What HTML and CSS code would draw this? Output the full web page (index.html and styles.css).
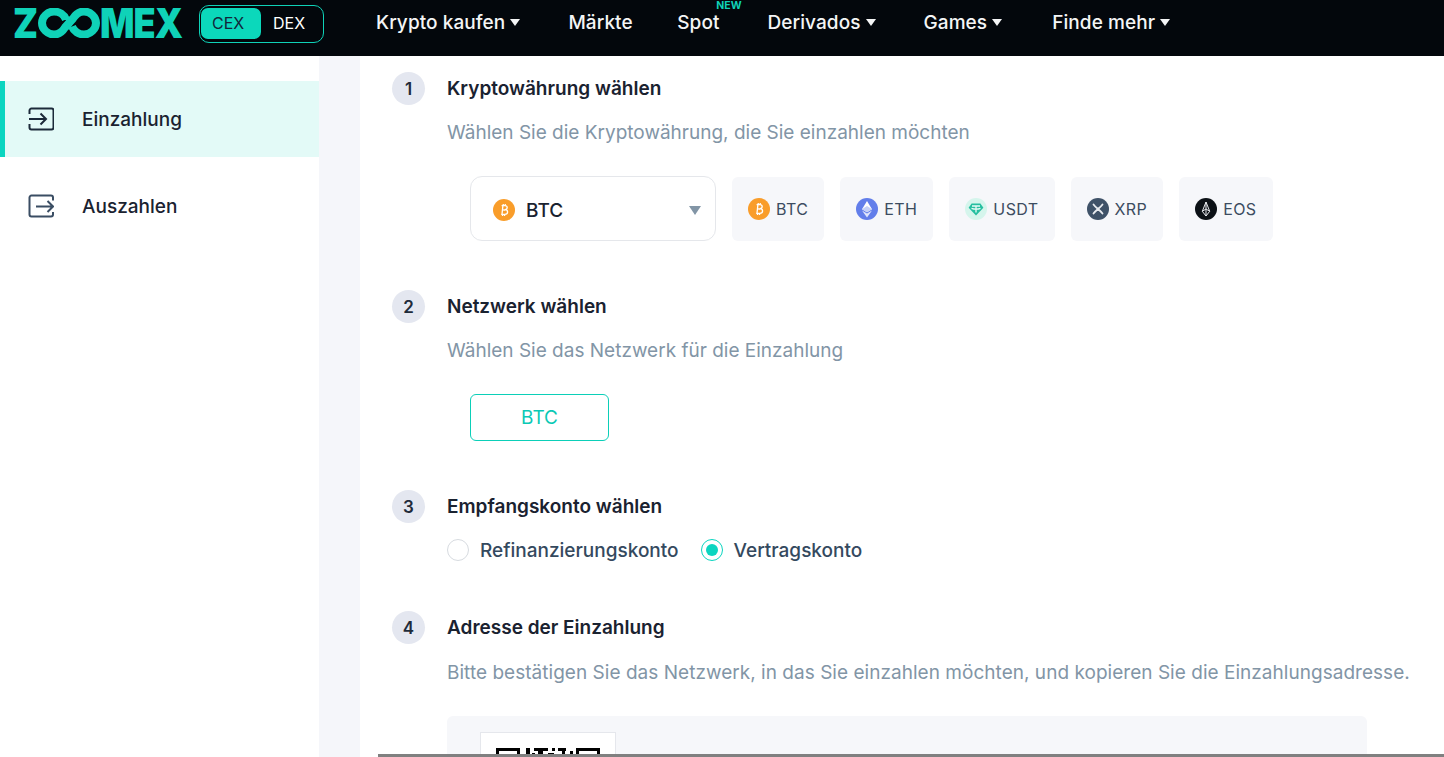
FILE: index.html
```html
<!DOCTYPE html>
<html lang="de">
<head>
  <meta charset="UTF-8" />
  <meta name="viewport" content="width=device-width, initial-scale=1.0"/>
  <title>Zoomex - Einzahlung</title>
  <link rel="stylesheet" href="styles.css">
</head>
<body>
  <svg class="defs" width="0" height="0">
    <symbol id="coin-btc" viewBox="0 0 22 22">
      <circle cx="11" cy="11" r="11" fill="#f99d2a"/>
      <path d="M8.600 6.600h3.200c1.500 0 2.400.8 2.400 2s-.8 1.900-2.200 2c1.600.1 2.600 1 2.600 2.300 0 1.400-1.100 2.400-2.800 2.400H8.200M9.900 6.600l-.9 8.700M10.200 11h1.800M10.300 5l-.2 1.600M12.300 5l-.2 1.600M9.700 15.300l-.2 1.700M11.700 15.300l-.2 1.700" fill="none" stroke="#fff" stroke-width="1.300"/>
    </symbol>
    <symbol id="coin-eth" viewBox="0 0 22 22">
      <circle cx="11" cy="11" r="11" fill="#627eea"/>
      <path d="M11 3l-5 8.200 5 3 5-3z" fill="#fff"/>
      <path d="M11 15.400l-5-3 5 7 5-7z" fill="#fff" opacity=".8"/>
      <path d="M11 8l-5 3.200 5 3 5-3z" fill="#c5d0f7"/>
    </symbol>
    <symbol id="coin-usdt" viewBox="0 0 22 22">
      <circle cx="11" cy="11" r="11" fill="#d5f5ec"/>
      <path d="M6.600 5.500h8.800l3 4.200L11 17.500 3.600 9.700z" fill="#26bfa0"/>
      <path d="M7 8h8M11 8v6.500M6.500 10.300c2.800 1 6.200 1 9 0" fill="none" stroke="#e9fbf6" stroke-width="1.300"/>
    </symbol>
    <symbol id="coin-xrp" viewBox="0 0 22 22">
      <circle cx="11" cy="11" r="11" fill="#3f5268"/>
      <path d="M6.500 6.500c2.500 3.500 6.500 5.500 9 9M15.500 6.500c-2.500 3.500-6.500 5.500-9 9" fill="none" stroke="#e8ebef" stroke-width="1.800" stroke-linecap="round"/>
    </symbol>
    <symbol id="coin-eos" viewBox="0 0 22 22">
      <circle cx="11" cy="11" r="11" fill="#0c1116"/>
      <path d="M11 4L7.300 13.300 11 18l3.700-4.700zM11 4v14M7.300 13.300L11 11l3.700 2.300" fill="none" stroke="#e8ebef" stroke-width="1"/>
    </symbol>
  </svg>

  <header class="topbar">
    <a class="logo" aria-label="Zoomex">
      <span class="logo-z">Z</span>
      <svg class="logo-oo" viewBox="0 0 62 30" width="62" height="30">
        <path d="M28 11.500C26 6.500 21 3.500 16 3.500 9.500 3.500 4 9 4 15S9.500 26.500 16 26.500c5 0 8.500-3 11-7l8-9c2.500-4 6-7 11-7 6.500 0 12 5.500 12 11.500S52.500 26.500 46 26.500c-5 0-10-3-12-8" fill="none" stroke="#0fd2b8" stroke-width="8"/>
      </svg>
      <span class="logo-mex">MEX</span>
    </a>
    <div class="switch">
      <span class="switch-item active">CEX</span>
      <span class="switch-item">DEX</span>
    </div>
    <nav class="nav">
      <a class="nav-item">Krypto kaufen<i class="caret"></i></a>
      <a class="nav-item">Märkte</a>
      <a class="nav-item spot">Spot<span class="new">NEW</span></a>
      <a class="nav-item">Derivados<i class="caret"></i></a>
      <a class="nav-item">Games<i class="caret"></i></a>
      <a class="nav-item more">Finde mehr<i class="caret"></i></a>
    </nav>
  </header>

  <div class="layout">
    <aside class="sidebar">
      <a class="side-item active">
        <svg class="side-icon" viewBox="0 0 26 24" width="26" height="24">
          <path d="M1.500 7V3.500a2 2 0 0 1 2-2h20a2 2 0 0 1 2 2v17a2 2 0 0 1-2 2h-20a2 2 0 0 1-2-2V17" fill="none" stroke="#1c2a3a" stroke-width="2"/>
          <path d="M1 12h16.500M12.500 6.500l5.500 5.500-5.500 5.500" fill="none" stroke="#1c2a3a" stroke-width="2"/>
        </svg>
        Einzahlung
      </a>
      <a class="side-item">
        <svg class="side-icon" viewBox="0 0 26 24" width="26" height="24">
          <path d="M25 6.500V3.500a2 2 0 0 0-2-2H3.500a2 2 0 0 0-2 2v17a2 2 0 0 0 2 2H23a2 2 0 0 0 2-2V18" fill="none" stroke="#3a4d63" stroke-width="2"/>
          <path d="M8 12.500h17M19.500 7l5.500 5.500-5.500 5.500" fill="none" stroke="#3a4d63" stroke-width="2"/>
        </svg>
        Auszahlen
      </a>
    </aside>

    <main class="content">
      <section class="step">
        <div class="step-head"><span class="step-num">1</span><h3>Kryptowährung wählen</h3></div>
        <p class="step-sub">Wählen Sie die Kryptowährung, die Sie einzahlen möchten</p>
        <div class="coin-row">
          <div class="coin-select">
            <svg class="coin"><use href="#coin-btc"/></svg>
            <span>BTC</span>
            <i class="select-arrow"></i>
          </div>
          <a class="chip"><svg class="coin"><use href="#coin-btc"/></svg>BTC</a>
          <a class="chip"><svg class="coin"><use href="#coin-eth"/></svg>ETH</a>
          <a class="chip"><svg class="coin"><use href="#coin-usdt"/></svg>USDT</a>
          <a class="chip"><svg class="coin"><use href="#coin-xrp"/></svg>XRP</a>
          <a class="chip"><svg class="coin"><use href="#coin-eos"/></svg>EOS</a>
        </div>
      </section>

      <section class="step">
        <div class="step-head"><span class="step-num">2</span><h3>Netzwerk wählen</h3></div>
        <p class="step-sub">Wählen Sie das Netzwerk für die Einzahlung</p>
        <a class="network-btn">BTC</a>
      </section>

      <section class="step">
        <div class="step-head"><span class="step-num">3</span><h3>Empfangskonto wählen</h3></div>
        <div class="radios">
          <label class="radio"><i class="radio-dot"></i>Refinanzierungskonto</label>
          <label class="radio checked"><i class="radio-dot"></i>Vertragskonto</label>
        </div>
      </section>

      <section class="step">
        <div class="step-head"><span class="step-num">4</span><h3>Adresse der Einzahlung</h3></div>
        <p class="step-sub long">Bitte bestätigen Sie das Netzwerk, in das Sie einzahlen möchten, und kopieren Sie die Einzahlungsadresse.</p>
        <div class="address-panel">
          <div class="qr-box">
            <svg viewBox="0 0 104 104" width="104" height="104">
              <path d="M0 0h24v24H0zM3 3v18h18V3z" fill-rule="evenodd"/>
              <path d="M80 0h24v24H80zM83 3v18h18V3z" fill-rule="evenodd"/>
              <path d="M6 6h12v12H6zM86 6h12v12H86z"/>
              <path d="M30 0h4v7h-4zM38 0h14v3H38zM42 3h5v5h-5zM56 0h3v3h-3zM62 0h8v3h-8zM66 3h3v5h-3zM74 3h3v5h-3zM36 5h3v3h-3zM52 5h6v3h-6z"/>
            </svg>
          </div>
        </div>
      </section>
    </main>
  </div>

  <div class="scrollbar"></div>
</body>
</html>
```

FILE: styles.css
```css
* {
  box-sizing: border-box;
}

body {
  margin: 0;
  height: 757px;
  overflow: hidden;
  position: relative;
  font-family: Inter, 'Noto Sans', sans-serif;
  background: #fff;
  color: #1a2230;
}

a {
  color: inherit;
  text-decoration: none;
}

.defs {
  display: block;
  height: 0;
}

/* top bar */
.topbar {
  height: 56px;
  background: #03070c;
  display: flex;
  align-items: flex-start;
  padding-left: 13px;
  color: #fff;
}

.logo {
  display: flex;
  align-items: center;
  height: 30px;
  margin-top: 8px;
  width: 170px;
  font-size: 41px;
  font-weight: 900;
  color: #0fd2b8;
  line-height: 30px;
}

.logo-z,
.logo-mex {
  flex: none;
  display: block;
  transform-origin: left center;
}

.logo-z {
  width: 25px;
  transform: scaleX(0.88);
}

.logo-mex {
  width: 82px;
  letter-spacing: -1px;
  transform: scaleX(0.88);
}

.logo-oo {
  flex: none;
}

.switch {
  margin: 5px 0 0 16px;
  width: 125px;
  height: 38px;
  border: 1px solid #0fd2b8;
  border-radius: 10px;
  padding: 2px 1px;
  display: flex;
}

.switch-item {
  width: 60px;
  height: 31px;
  line-height: 31px;
  padding-left: 12px;
  font-size: 16px;
  border-radius: 7px;
}

.switch-item.active {
  background: #0bd8bb;
  padding-left: 11px;
  color: #12263a;
}

.nav {
  display: flex;
  gap: 48px;
  margin-left: 52px;
}

.nav-item {
  position: relative;
  font-size: 19px;
  font-weight: 500;
  letter-spacing: 0.08px;
  line-height: 24px;
  margin-top: 11px;
  color: #f4f5f6;
  white-space: nowrap;
}

.nav-item.spot {
  margin-left: -3.5px;
}

.nav-item.more {
  margin-left: 2px;
}

.caret {
  display: inline-block;
  margin-left: 5px;
  vertical-align: 3px;
  border-left: 5px solid transparent;
  border-right: 5px solid transparent;
  border-top: 7px solid #f4f5f6;
}

.new {
  position: absolute;
  left: 39px;
  top: -11px;
  font-size: 10.5px;
  font-weight: 700;
  line-height: 11px;
  color: #0fd2b8;
}

/* page */
.layout {
  display: flex;
  height: 701px;
}

.sidebar {
  width: 319px;
  flex: none;
  padding-top: 25px;
  display: flex;
  flex-direction: column;
  gap: 11px;
}

.side-item {
  height: 76px;
  display: flex;
  align-items: center;
  gap: 28px;
  padding-left: 28px;
  font-size: 19px;
  font-weight: 500;
  color: #1a2230;
}

.side-item.active {
  background: #e3faf7;
  border-left: 5px solid #0bd5c0;
  padding-left: 23px;
}

.side-icon {
  flex: none;
}

.content {
  flex: 1;
  margin-left: 41px;
  padding: 16px 0 0 32px;
  background: #fff;
  box-shadow: -41px 0 0 #f5f6fa;
}

.step {
  margin-bottom: 49px;
}

.step:last-child {
  margin-bottom: 0;
}

.step-head {
  display: flex;
  align-items: center;
  gap: 22px;
  height: 33px;
}

.step-head h3 {
  margin: 0;
  font-size: 19px;
  font-weight: 600;
  color: #1a2230;
}

.step-num {
  width: 33px;
  height: 33px;
  border-radius: 50%;
  background: #e4e7f0;
  text-align: center;
  line-height: 34px;
  font-size: 17px;
  font-weight: 600;
  color: #1f2b3a;
}

.step-sub {
  margin: 16px 0 0 55px;
  font-size: 19px;
  line-height: 24px;
  color: #8295a6;
  white-space: nowrap;
}

.step-sub.long {
  letter-spacing: 0.03px;
  margin-top: 17px;
}

.step-sub.long + .address-panel {
  margin-top: 31px;
}

.coin-row {
  display: flex;
  gap: 16px;
  margin: 32px 0 0 78px;
}

.coin {
  width: 22px;
  height: 22px;
  flex: none;
}

.coin-select {
  width: 246px;
  height: 65px;
  margin-top: -1px;
  border: 1px solid #e5e7eb;
  border-radius: 12px;
  display: flex;
  align-items: center;
  padding: 3px 14px 0 22px;
  gap: 11px;
  font-size: 19px;
  font-weight: 500;
}

.select-arrow {
  margin-left: auto;
  border-left: 6px solid transparent;
  border-right: 6px solid transparent;
  border-top: 9px solid #8295a6;
}

.chip {
  height: 64px;
  min-width: 92px;
  padding: 0 16px;
  display: flex;
  align-items: center;
  justify-content: center;
  gap: 6px;
  background: #f6f7fa;
  border-radius: 6px;
  font-size: 16px;
  font-weight: 400;
  letter-spacing: 0.4px;
  color: #3c4c60;
}

.network-btn {
  display: block;
  width: 139px;
  height: 47px;
  line-height: 45px;
  margin: 31px 0 0 78px;
  border: 1px solid #0bcfb8;
  border-radius: 6px;
  text-align: center;
  font-size: 19px;
  font-weight: 400;
  color: #0bc9b5;
}

.radios {
  display: flex;
  gap: 22px;
  margin: 15px 0 0 55px;
}

.radio {
  display: flex;
  align-items: center;
  gap: 11px;
  height: 24px;
  font-size: 19px;
  font-weight: 500;
  color: #34495e;
}

.radio-dot {
  width: 22px;
  height: 22px;
  border-radius: 50%;
  border: 1px solid #d7dbe0;
  background: #fff;
}

.radio.checked .radio-dot {
  border-color: #0bd5c0;
  padding: 4px;
  background: #0bd5c0 content-box;
}

.address-panel {
  margin: 32px 0 0 55px;
  width: 920px;
  height: 41px;
  overflow: hidden;
  padding: 16px 33px;
  background: #f6f7fa;
  border-radius: 6px 6px 0 0;
}

.qr-box {
  width: 136px;
  height: 136px;
  padding: 15px;
  background: #fff;
  border: 1px solid #e5e7ec;
}

.scrollbar {
  position: absolute;
  left: 378px;
  right: 0;
  bottom: 0;
  height: 3px;
  background: #808080;
}
```
